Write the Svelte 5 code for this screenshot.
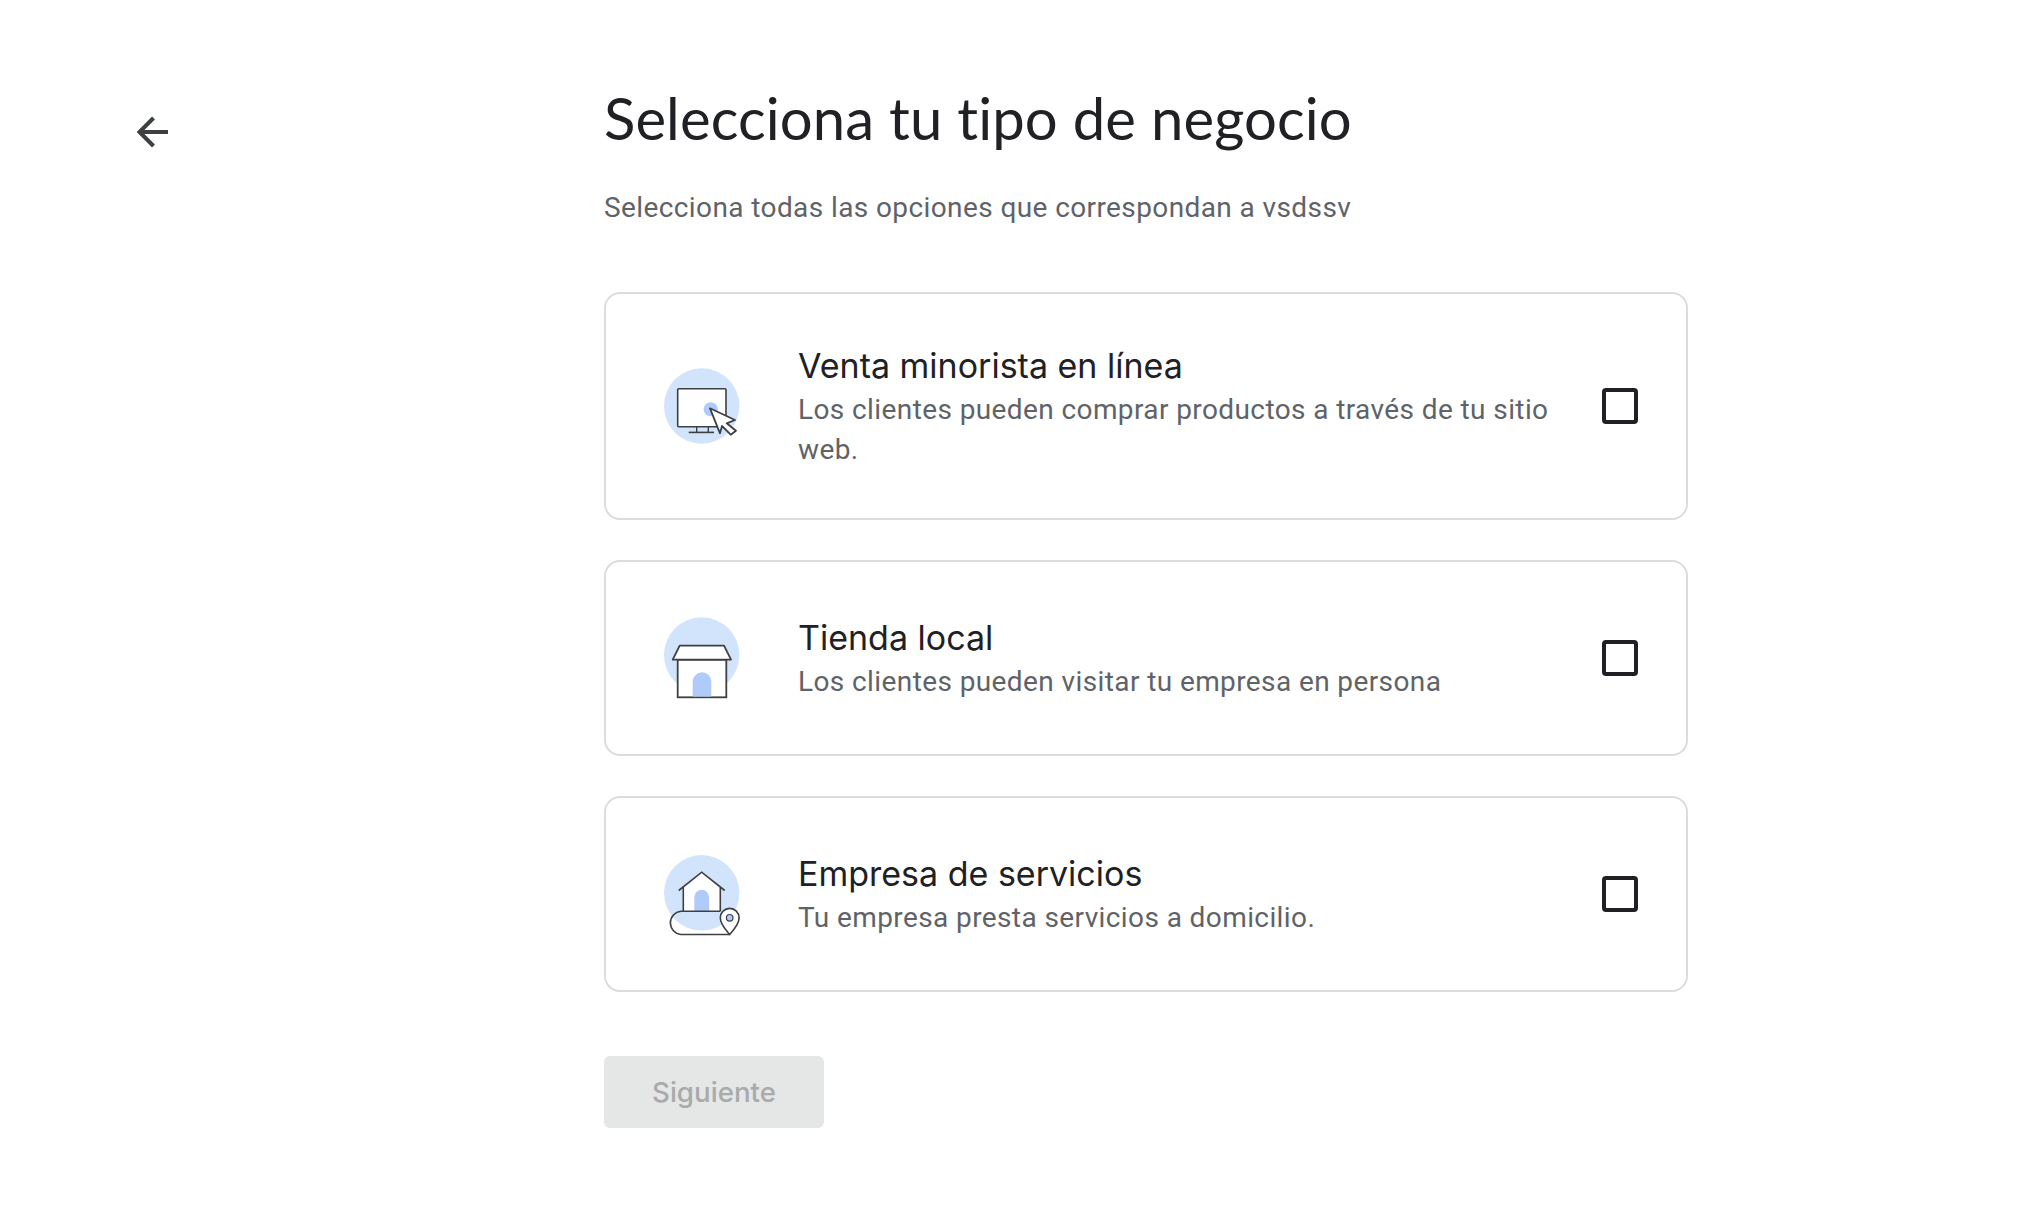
<script>
  const options = [
    {
      id: 'online',
      title: 'Venta minorista en línea',
      desc: 'Los clientes pueden comprar productos a través de tu sitio web.'
    },
    {
      id: 'local',
      title: 'Tienda local',
      desc: 'Los clientes pueden visitar tu empresa en persona'
    },
    {
      id: 'service',
      title: 'Empresa de servicios',
      desc: 'Tu empresa presta servicios a domicilio.'
    }
  ];

  let selected = $state({});
  let anySelected = $derived(Object.values(selected).some(Boolean));

  function toggle(id) {
    selected[id] = !selected[id];
  }
</script>

<div class="page">
  <div class="back-col">
    <button class="back" aria-label="Atrás">
      <svg width="40" height="40" viewBox="0 0 40 40">
        <path d="M36 20H8M21.5 6L7.5 20l14 14" fill="none" stroke="#3c4043" stroke-width="4" />
      </svg>
    </button>
  </div>

  <main class="content">
    <h1>Selecciona tu tipo de negocio</h1>
    <p class="sub">Selecciona todas las opciones que correspondan a vsdssv</p>

    <div class="cards">
      {#each options as opt}
        <div class="card" class:tall={opt.id === 'online'} onclick={() => toggle(opt.id)} role="presentation">
          <svg class="icon" width="100" height="100" viewBox="-50 -50 100 100">
            {#if opt.id === 'online'}
              <circle cx="-0.3" cy="0" r="37.7" fill="#d2e3fc" />
              <rect x="-24.3" y="-17.3" width="48.3" height="38" rx="1" fill="#fff" stroke="#3c4043" stroke-width="1.6" />
              <path d="M-5.3 20.7V26M6.3 20.7V26" fill="none" stroke="#3c4043" stroke-width="1.4" />
              <path d="M-13.3 26.4H12" fill="none" stroke="#3c4043" stroke-width="1.6" />
              <circle cx="8.7" cy="3.3" r="7" fill="#aecbfa" />
              <path d="M8 2.3L33 14l-8.3 3.3L34 24.7l-5.3 4L20 20l-2 7.3z" fill="#fff" stroke="#3c4043" stroke-width="1.8" stroke-linejoin="round" />
            {:else if opt.id === 'local'}
              <circle cx="-0.3" cy="-3" r="37.7" fill="#d2e3fc" />
              <rect x="-24.3" y="1.7" width="48.6" height="37.6" fill="#fff" stroke="#3c4043" stroke-width="1.8" />
              <path d="M-9.3 38.4V23.6a9.3 9.3 0 0 1 18.6 0V38.4z" fill="#aecbfa" />
              <path d="M-22.3-12.3H22L29 1.7H-29.3z" fill="#fff" stroke="#3c4043" stroke-width="1.8" stroke-linejoin="round" />
            {:else}
              <circle cx="-0.3" cy="-1.2" r="37.7" fill="#d2e3fc" />
              <path d="M-18.7-6.8L-0.3-21.8 18.3-6.8V17.2H-18.7z" fill="#fff" />
              <path d="M-7.7 17.2V3.2a7.4 7.4 0 0 1 14.8 0V17.2z" fill="#aecbfa" />
              <path d="M-23.3-3.5L-0.3-21.8 22.7-3.5M-18.7-7V17.2M18.3-7V17.2" fill="none" stroke="#3c4043" stroke-width="1.6" />
              <path d="M27.3 40.5H-21a11.7 11.7 0 0 1 0-23.3H18.3" fill="none" stroke="#3c4043" stroke-width="1.6" />
              <path d="M27.7 40.5C24 36 18.3 30.5 18.3 23.8a9.4 9.4 0 0 1 18.8 0C37.1 30.5 31.4 36 27.7 40.5z" fill="#fff" stroke="#3c4043" stroke-width="1.6" />
              <circle cx="27.7" cy="23.8" r="3.3" fill="#aecbfa" stroke="#3c4043" stroke-width="1.2" />
            {/if}
          </svg>
          <div class="text">
            <div class="title">{opt.title}</div>
            <div class="desc">{opt.desc}</div>
          </div>
          <span class="check" class:on={selected[opt.id]}></span>
        </div>
      {/each}
    </div>

    <button class="next" disabled={!anySelected}>Siguiente</button>
  </main>
</div>

<style>
  :global(body) {
    background: #fff;
  }

  .page {
    display: flex;
    min-height: 1230px;
    box-sizing: border-box;
    padding-top: 79px;
  }

  .back-col {
    width: 604px;
    flex: none;
    padding: 33px 0 0 132px;
    box-sizing: border-box;
  }

  .back {
    display: block;
    padding: 0;
    border: 0;
    background: none;
    cursor: pointer;
  }

  .back svg {
    display: block;
  }

  .content {
    width: 1084px;
  }

  h1 {
    margin: 0;
    font-family: Lato, sans-serif;
    font-size: 58px;
    font-weight: 400;
    line-height: 78px;
    letter-spacing: 0.1px;
    color: #202124;
  }

  .sub {
    margin: 31px 0 0;
    font-family: Roboto, sans-serif;
    font-size: 28px;
    line-height: 40px;
    letter-spacing: 0.4px;
    color: #5f6368;
  }

  .cards {
    display: flex;
    flex-direction: column;
    gap: 40px;
    margin-top: 64px;
  }

  .card {
    display: flex;
    align-items: center;
    height: 196px;
    box-sizing: border-box;
    padding: 0 48px 0 46px;
    border: 2px solid #dadce0;
    border-radius: 16px;
    cursor: pointer;
  }

  .card.tall {
    height: 228px;
  }

  .icon {
    flex: none;
    margin-right: 46px;
  }

  .text {
    flex: 1;
    min-width: 0;
    padding: 2px 40px 0 0;
  }

  .title {
    font-family: Inter, sans-serif;
    font-size: 34px;
    line-height: 44px;
    color: #202124;
  }

  .desc {
    margin-top: 2px;
    font-family: Roboto, sans-serif;
    font-size: 28px;
    line-height: 40px;
    letter-spacing: 0.4px;
    color: #5f6368;
  }

  .check {
    flex: none;
    width: 36px;
    height: 36px;
    box-sizing: border-box;
    border: 4.5px solid #202124;
    border-radius: 4px;
  }

  .check.on {
    background: #1a73e8;
    border-color: #1a73e8;
  }

  .next {
    display: block;
    width: 220px;
    height: 72px;
    margin-top: 64px;
    padding: 0;
    border: 0;
    border-radius: 6px;
    background: #1a73e8;
    color: #fff;
    font-family: Inter, sans-serif;
    font-size: 27.7px;
    font-weight: 500;
  }

  .next:disabled {
    background: #e5e6e6;
    color: #a9aaab;
  }
</style>
